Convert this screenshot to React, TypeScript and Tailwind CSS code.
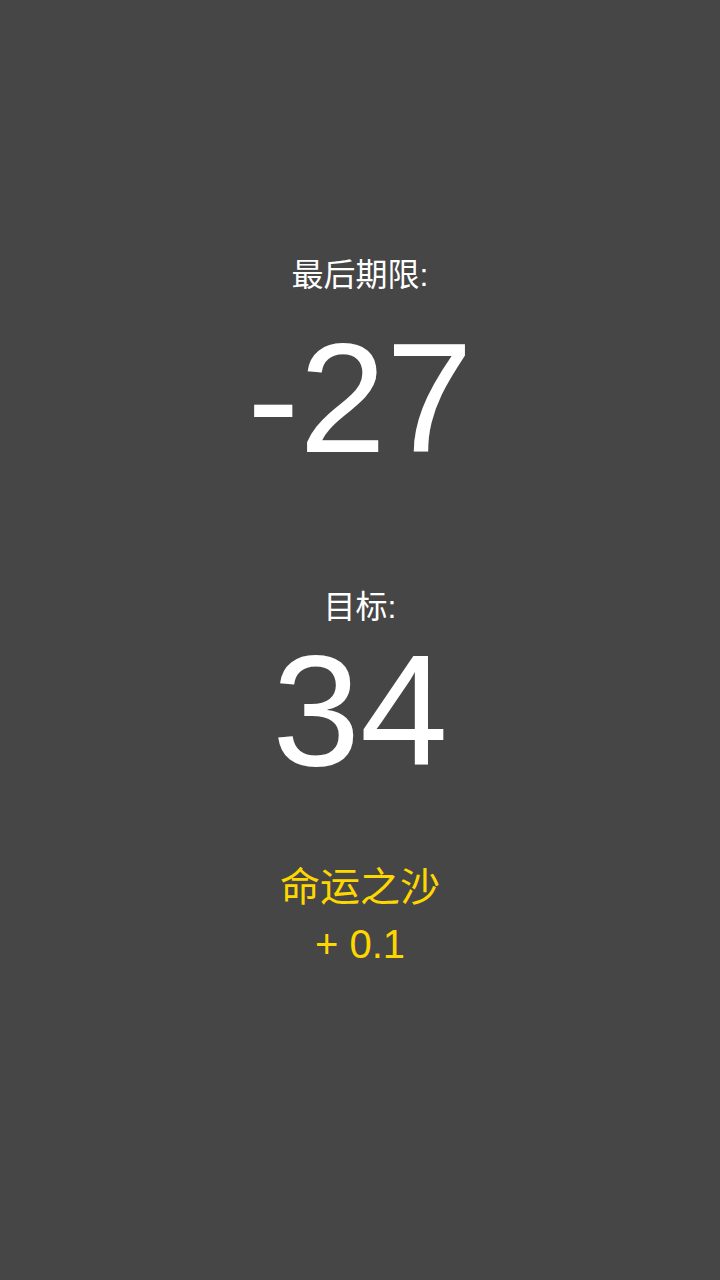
export default function App() {
  const font = { fontFamily: '"Liberation Sans", "Noto Sans CJK SC", sans-serif' };
  return (
    <div
      className="w-[720px] h-[1280px] bg-[#464646] flex flex-col items-center pt-[259px] text-white"
      style={font}
    >
      <div className="text-[32px] leading-[32px]">最后期限:</div>
      <div className="mt-[29px] text-[156px] leading-[156px]">-27</div>

      <div className="mt-[115px] text-[32px] leading-[32px]">目标:</div>
      <div className="mt-[8px] text-[158px] leading-[158px]">34</div>

      <div className="mt-[78px] text-[40px] leading-[40px] text-[#ffd700]">命运之沙</div>
      <div className="mt-[17px] text-[40px] leading-[40px] text-[#ffd700]">+ 0.1</div>
    </div>
  );
}
